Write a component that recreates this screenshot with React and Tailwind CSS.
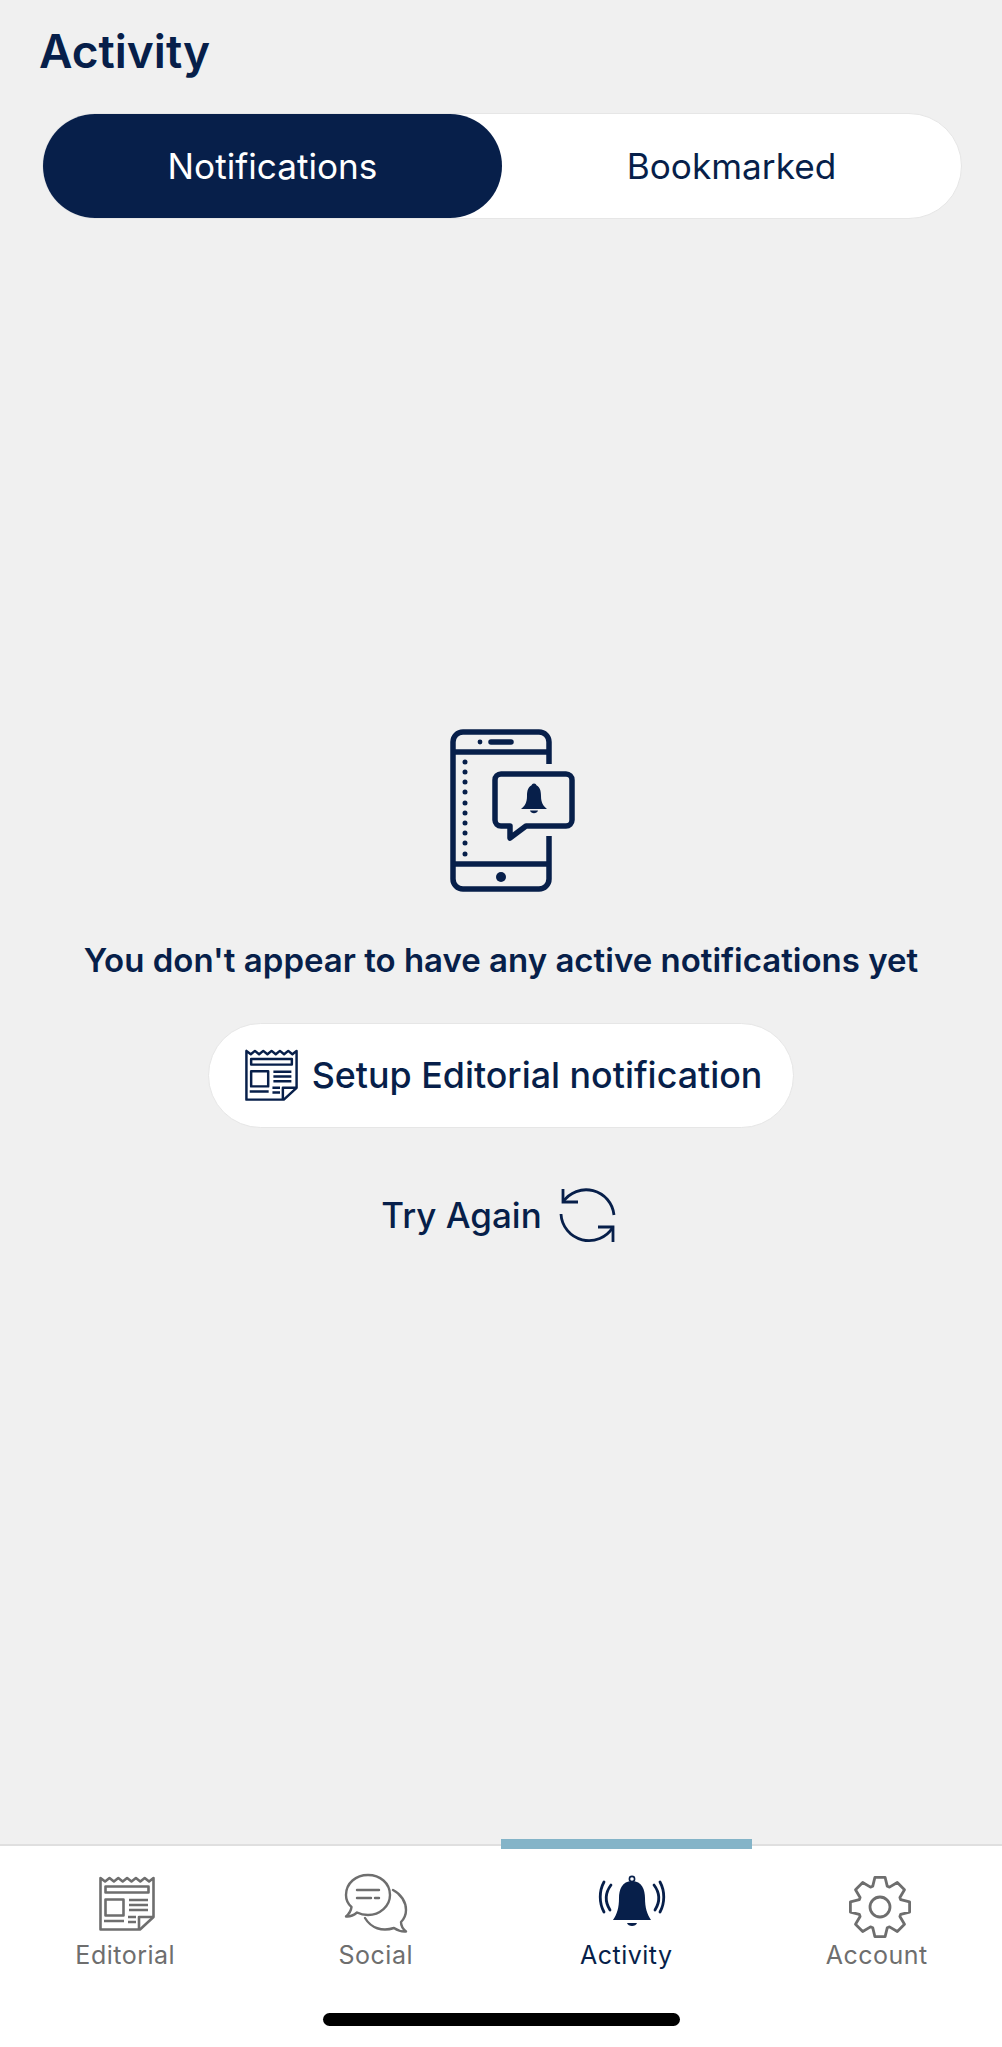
import React from "react";

const navy = "#071f4a";
const grey = "#6e6e6e";

// 8 teeth gear outline, centre 44,45
const gearPath = (() => {
  const pts = [];
  for (let i = 0; i < 8; i++) {
    const a = (i * 45 - 90) * (Math.PI / 180);
    [[22, -0.34], [30, -0.17], [30, 0.17], [22, 0.34]].forEach(([r, o]) => {
      pts.push(`${(44 + r * Math.cos(a + o)).toFixed(1)} ${(45 + r * Math.sin(a + o)).toFixed(1)}`);
    });
  }
  return "M" + pts.join("L") + "Z";
})();

function NewspaperIcon({ color, size = 56, className = "" }) {
  return (
    <svg className={className} width={size} height={size} viewBox="0 0 56 56" fill="none" stroke={color} strokeWidth="2.6" strokeLinejoin="round">
      <path d="M1.5 2v51.5H41L54.5 41V2l-4.4 3.5-4.4-3.5-4.4 3.5-4.4-3.5-4.4 3.5-4.4-3.5-4.4 3.5-4.4-3.5-4.4 3.500-4.4-3.500-4.400 3.500z" />
      <path d="M40 53V41h14" />
      <rect x="6.5" y="10.5" width="43" height="6" />
      <rect x="6.5" y="23.5" width="18" height="16" />
      <path d="M30 24h19M30 29h19M30 34h19M5 45h20M29 41h8M29 46h8" />
    </svg>
  );
}

function SocialIcon() {
  return (
    <svg width="64" height="62" viewBox="0 0 64 62" fill="none" stroke={grey} strokeWidth="2.4" strokeLinejoin="round" strokeLinecap="round">
      <path d="M24 2C36 2 46 10 46 22C46 33 36 42 24 42C20 42 16 41 13 39.5C10 42 6 44 2 43.5C5 41 7 38 7.5 34C4 31 2 27 2 22C2 10 12 2 24 2Z" />
      <path d="M13 17h22M13 25h14M31 25h4" />
      <path d="M49 17C57 21 62 29 62 37C62 43 59 47 57 49C57 53 59 56 62 58.5C57 59 53 57 50 55C38 59 27 55 21 45" />
    </svg>
  );
}

function BellIcon() {
  return (
    <svg width="90" height="80" viewBox="-6 2 90 80" fill="none">
      <circle cx="45" cy="17" r="2.6" stroke={navy} strokeWidth="1.6" />
      <path d="M45 19C35 19 32 28 32 36C32 46 30 52 26 58H64C60 52 58 46 58 36C58 28 55 19 45 19Z" fill={navy} />
      <path d="M40 61H50C49 65 41 65 40 61Z" fill={navy} />
      <g stroke={navy} strokeWidth="2.8" strokeLinecap="round">
        <path d="M17 20C12 29 12 41 17 50M24 23C18 31 18 40 23 48" />
        <path d="M73 20C78 29 78 41 73 50M67 23C73 31 73 40 68 48" />
      </g>
    </svg>
  );
}

function GearIcon() {
  return (
    <svg width="90" height="80" viewBox="-4 2 90 80" fill="none" stroke={grey} strokeWidth="2.8" strokeLinejoin="round">
      <path d={gearPath} />
      <circle cx="44" cy="45" r="10" />
    </svg>
  );
}

function PhoneBellIcon() {
  return (
    <svg width="198" height="190" viewBox="-18 0 198 190" fill="none" stroke={navy} strokeWidth="5.500" strokeLinejoin="round">
      <path d="M129 54V32a10 10 0 0 0-10-10H43a10 10 0 0 0-10 10V169a10 10 0 0 0 10 10H119a10 10 0 0 0 10-10V126" />
      <path d="M33 42H129M33 154H129" />
      <path d="M71 32H91" strokeLinecap="round" />
      <circle cx="60" cy="32" r="2.4" fill={navy} stroke="none" />
      <circle cx="81" cy="167" r="5" fill={navy} stroke="none" />
      {[52, 62, 72, 82, 93, 103, 113, 123, 133, 144].map((y) => (
        <circle key={y} cx="45" cy={y} r="2.5" fill={navy} stroke="none" />
      ))}
      <path d="M81 64H146a6 6 0 0 1 6 6V110a6 6 0 0 1-6 6H106L90 128V116H81a6 6 0 0 1-6-6V70a6 6 0 0 1 6-6Z" />
      <path d="M114 75C108 75 107 81 107 86C107 92 105 96 101 99H127C123 96 121 92 121 86C121 81 120 75 114 75ZM110 100.500H118C117 104 111 104 110 100.500Z" fill={navy} stroke="none" />
      <circle cx="114" cy="76" r="2.5" fill={navy} stroke="none" />
    </svg>
  );
}

function SyncIcon() {
  return (
    <svg width="70" height="70" viewBox="0 6 70 70" fill="none" stroke={navy} strokeWidth="2.8">
      <path d="M12 15V28H27" />
      <path d="M12 28A28 28 0 0 1 63 41" />
      <path d="M47 53H62V68" />
      <path d="M62 53A28 28 0 0 1 10 40" />
    </svg>
  );
}

function TabItem({ label, active, children }) {
  return (
    <div className="flex flex-col items-center">
      <div className="flex h-[80px] w-[90px] items-center justify-center">{children}</div>
      <span className={`mt-[-4px] text-[25px] leading-[30px] tracking-[0.5px] ${active ? "text-[#071f4a]" : "text-[#6e6e6e]"}`}>
        {label}
      </span>
    </div>
  );
}

export default function App() {
  return (
    <div className="flex h-[2047px] w-full flex-col overflow-hidden bg-[#f0f0f0] font-['Inter',sans-serif] text-[#071f4a]">
      <h1 className="ml-[39px] mt-[25px] text-[46px] font-semibold leading-[52px]">Activity</h1>

      {/* Notifications / Bookmarked toggle */}
      <div className="ml-[42px] mr-[40px] mt-[36px] flex h-[106px] rounded-full border border-[#e6e6e6] bg-white text-[35.200px]">
        <div className="flex w-[459px] items-center justify-center rounded-full bg-[#071f4a] text-white">Notifications</div>
        <div className="flex flex-1 items-center justify-center">Bookmarked</div>
      </div>

      <main className="flex flex-1 flex-col items-center pt-[491px]">
        <PhoneBellIcon />
        <p className="mt-[38px] text-[33px] font-semibold leading-[44px]">You don't appear to have any active notifications yet</p>
        <button className="mt-[41px] flex h-[105px] w-[586px] items-center justify-center gap-[14px] rounded-full border border-[#e6e6e6] bg-white pl-[5px] text-[35.800px] font-medium">
          <NewspaperIcon color={navy} size={53} />
          Setup Editorial notification
        </button>
        <div className="mt-[52px] flex items-center gap-[9px] text-[35px] font-medium">
          <span>Try Again</span>
          <SyncIcon />
        </div>
      </main>

      {/* Bottom tabs */}
      <div className="relative flex h-[203px] flex-col border-t-2 border-[#dfdfdf] bg-white">
        <div className="absolute left-[501px] top-[-7px] h-[10px] w-[251px] bg-[#84b4c8]" />
        <div className="grid grid-cols-4 pt-[18px]">
          <TabItem label="Editorial"><NewspaperIcon color={grey} className="ml-[4px]" /></TabItem>
          <TabItem label="Social"><SocialIcon /></TabItem>
          <TabItem label="Activity" active><BellIcon /></TabItem>
          <TabItem label="Account"><GearIcon /></TabItem>
        </div>
        <div className="mx-auto mt-[43px] h-[13px] w-[357px] rounded-full bg-black" />
      </div>
    </div>
  );
}
